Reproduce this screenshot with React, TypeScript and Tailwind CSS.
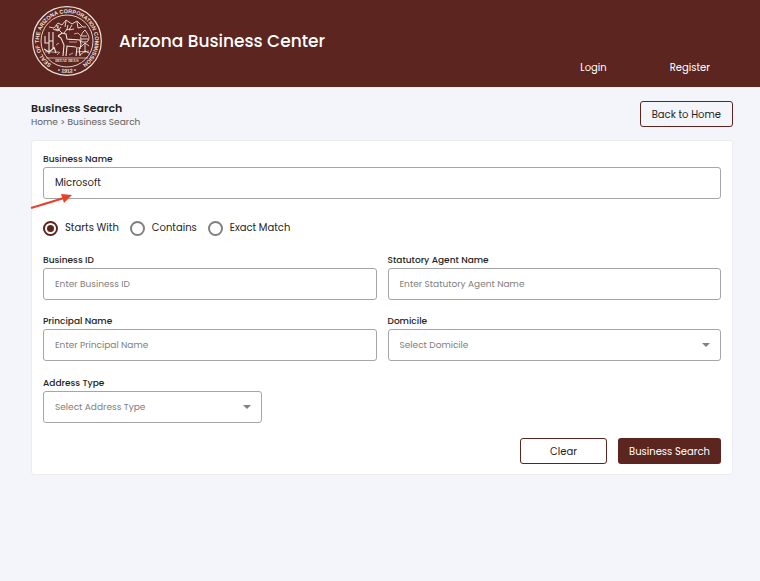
import { useState } from "react";
import type { ReactNode } from "react";

const matchOptions = ["Starts With", "Contains", "Exact Match"];

const controlClass =
  "block h-8 w-full rounded-[3px] border border-[#a6a6a6] bg-white pl-[11px] pr-3 outline-none placeholder:text-[#808080]";

function Seal() {
  return (
    <svg
      viewBox="0 0 72 72"
      className="size-[72px] shrink-0"
      fill="none"
      stroke="#f1e3dc"
      role="img"
      aria-label="Seal of the Arizona Corporation Commission"
    >
      <defs>
        <path id="seal-top" d="M25.5 62A28 28 0 1 1 46.5 62" />
        <path id="seal-bottom" d="M21 64.2A32 32 0 0 0 51 64.2" />
      </defs>
      <circle cx="36" cy="36" r="34.3" strokeWidth="1.2" />
      <circle cx="36" cy="36" r="26" strokeWidth=".9" />
      <g
        fill="#f1e3dc"
        stroke="none"
        className="font-['Liberation_Sans',sans-serif] text-[5.5px] font-bold"
      >
        <text>
          <textPath href="#seal-top" startOffset="50%" textAnchor="middle">
            SEAL OF THE ARIZONA CORPORATION COMMISSION
          </textPath>
        </text>
        <text>
          <textPath href="#seal-bottom" startOffset="50%" textAnchor="middle">
            • 1912 •
          </textPath>
        </text>
        <text
          x="36"
          y="57"
          textAnchor="middle"
          className="font-['Liberation_Serif',serif] text-[4px]"
        >
          DITAT DEUS
        </text>
      </g>
      {/* ground and mountains */}
      <path d="M15 53H57M14 47c5-1 8 1 14 0M46 47c5-1 8 0 12-1" strokeWidth=".7" />
      <path
        d="M18 22l5 1 4-5 4 2 4-5 6 4 5-3 6 6 3 0M22 24l5 2 3-4M41 20l-3 5 5-1M46 17l1 6 4-1M35 16l-1 6M25 20l2 3"
        strokeWidth=".9"
      />
      {/* saguaro and shrubs */}
      <path d="M18 49V27M18 38h-4v-7M18 36h4v-9M22 44v-8M13 44l5 3 5-4M25 48l-2-6" strokeWidth="1.1" />
      <path d="M54 48V38M50 42l4-4 4 3M51 37c-3-4 0-8 1-10l2-2 2 3c2 3 3 6 0 9zM51 31h5M50 34h7M49 50l5-4 4 2" strokeWidth=".9" />
      {/* deer */}
      <path
        d="M27 31l4-3 4 1 1 5c5 1 9 0 13 1l1 4-1 5M48 42l1 9M46 42l-1 9M45 42l-9-1-1 10M33 40l-1 11M33 40l-3-7-3-2"
        strokeWidth="1.1"
      />
      <path d="M31 28l-4-4v-4M28 25l-4-1M33 28l3-4 1-4M35 25l4-1" strokeWidth=".9" />
      <path d="M38 37h8" stroke="#a87268" strokeWidth="1.5" />
      <path d="M26 50l3-3M38 50l4-2M43 29l4-1 3 3M25 40l3-2" strokeWidth=".7" />
    </svg>
  );
}

function Field({
  id,
  label,
  children,
}: {
  id: string;
  label: string;
  children: ReactNode;
}) {
  return (
    <div>
      <label htmlFor={id} className="block text-[9px] leading-4 font-medium text-[#242424]">
        {label}
      </label>
      {children}
    </div>
  );
}

function TextField({ id, label }: { id: string; label: string }) {
  return (
    <Field id={id} label={label}>
      <input
        id={id}
        type="text"
        placeholder={`Enter ${label}`}
        className={`${controlClass} text-[9px]`}
      />
    </Field>
  );
}

function SelectField({ id, label }: { id: string; label: string }) {
  return (
    <Field id={id} label={label}>
      <div className="relative">
        <select
          id={id}
          className={`${controlClass} appearance-none pt-0.5 text-[9px] text-[#808080]`}
        >
          <option>Select {label}</option>
        </select>
        <svg
          viewBox="0 0 8 4"
          className="pointer-events-none absolute top-[14px] right-[11px] h-1 w-2"
          fill="#808080"
          aria-hidden="true"
        >
          <path d="M0 0h8L4 4z" />
        </svg>
      </div>
    </Field>
  );
}

export default function App() {
  const [name, setName] = useState("Microsoft");
  const [match, setMatch] = useState("Starts With");

  return (
    <div className="min-h-screen bg-[#f4f5fa] font-[Poppins,Inter,sans-serif] text-[#242424]">
      <header className="flex justify-between bg-[#5c2520] pt-[5px] pr-[50px] pb-[10px] pl-[31px] text-white">
        <div className="flex items-center gap-4">
          <Seal />
          <span className="text-[17px] leading-7 font-medium">Arizona Business Center</span>
        </div>
        <nav className="flex items-end gap-[63px] pb-px text-[10px] leading-4">
          <a href="#login">Login</a>
          <a href="#register">Register</a>
        </nav>
      </header>

      <main className="pt-[13px] pr-[27px] pl-[31px]">
        <div className="flex items-center justify-between">
          <div>
            <h1 className="text-[11px] leading-4 font-semibold">Business Search</h1>
            <p className="text-[9px] leading-3 text-[#606060]">
              <a href="#home">Home</a> &gt; Business Search
            </p>
          </div>
          <button
            type="button"
            className="h-[26px] rounded-[3px] border border-[#5c2520] px-[11px] text-[10px]"
          >
            Back to Home
          </button>
        </div>

        <form
          className="mt-3 rounded-[3px] border border-[#ececf0] bg-white px-[11px] py-[10px]"
          onSubmit={(e) => e.preventDefault()}
        >
          <Field id="business-name" label="Business Name">
            <div className="relative">
              <input
                id="business-name"
                type="text"
                value={name}
                onChange={(e) => setName(e.target.value)}
                className={`${controlClass} text-[10px]`}
              />
              <svg
                viewBox="0 0 44 16"
                className="pointer-events-none absolute top-[26px] -left-[13px] h-4 w-11"
                aria-hidden="true"
              >
                <path d="M1 15L34 5" stroke="#e8402a" strokeWidth="2" />
                <path d="M31 1l11 1-8 8z" fill="#e8402a" />
              </svg>
            </div>
          </Field>

          <div
            role="radiogroup"
            aria-label="Match type"
            className="mt-[21px] flex items-center gap-[11px]"
          >
            {matchOptions.map((option) => (
              <label key={option} className="flex items-center gap-[7px] text-[10px] leading-4">
                <input
                  type="radio"
                  name="match"
                  checked={match === option}
                  onChange={() => setMatch(option)}
                  className="grid size-[15px] appearance-none place-content-center rounded-full border-2 border-[#808080] before:size-[7px] before:rounded-full checked:border-[#5c2520] checked:before:bg-[#5c2520]"
                />
                {option}
              </label>
            ))}
          </div>

          <div className="mt-4 grid grid-cols-2 gap-x-[11px] gap-y-[13px]">
            <TextField id="business-id" label="Business ID" />
            <TextField id="agent" label="Statutory Agent Name" />
            <TextField id="principal" label="Principal Name" />
            <SelectField id="domicile" label="Domicile" />
          </div>
          <div className="mt-[14px] grid grid-cols-3 gap-x-[11px]">
            <SelectField id="address-type" label="Address Type" />
          </div>

          <div className="mt-[15px] flex justify-end gap-[11px]">
            <button
              type="button"
              onClick={() => setName("")}
              className="h-[26px] w-[87px] rounded-[3px] border border-[#5c2520] text-[10px]"
            >
              Clear
            </button>
            <button
              type="submit"
              className="h-[26px] rounded-[3px] bg-[#5c2520] px-[11px] text-[10px] text-white"
            >
              Business Search
            </button>
          </div>
        </form>
      </main>
    </div>
  );
}
